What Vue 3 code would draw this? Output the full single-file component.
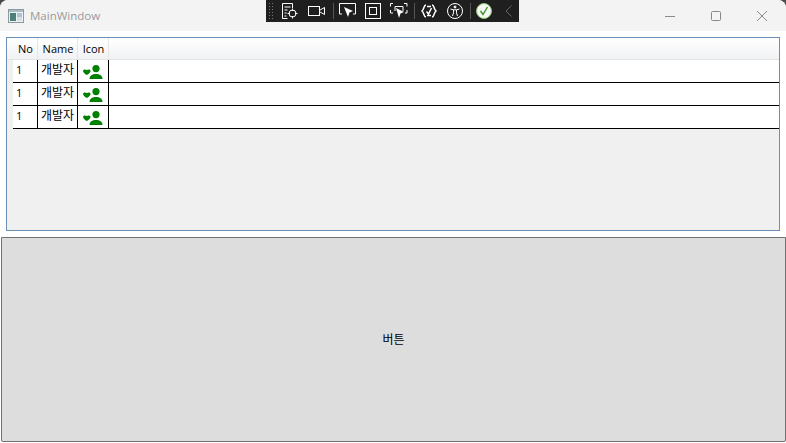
<script setup>
const rows = [1, 2, 3]
</script>

<template>
  <div class="window">
    <header class="titlebar">
      <svg class="app-icon" width="16" height="16" viewBox="0 0 16 16">
        <rect x="0.5" y="1.5" width="15" height="13" fill="#eef2f3" stroke="#8b9a9e" />
        <rect x="1" y="2" width="14" height="2" fill="#a9bcc4" />
        <rect x="2" y="5" width="6" height="8" fill="#4f7f78" />
        <rect x="9" y="5" width="5" height="4" fill="#a9c4d6" />
        <rect x="9" y="9" width="5" height="4" fill="#d5dfe2" />
      </svg>
      <span class="title">MainWindow</span>
      <div class="caption">
        <svg class="cap" width="12" height="12" viewBox="0 0 12 12"><path d="M1 6.5h10" stroke="#8a8a8a" fill="none" /></svg>
        <svg class="cap" width="12" height="12" viewBox="0 0 12 12"><rect x="1.5" y="1.5" width="9" height="9" rx="1" stroke="#8a8a8a" fill="none" /></svg>
        <svg class="cap" width="12" height="12" viewBox="0 0 12 12"><path d="M1 1l10 10M11 1L1 11" stroke="#8a8a8a" fill="none" /></svg>
      </div>
    </header>

    <section class="grid-host">
      <div class="grid">
        <div class="row head">
          <div class="cell">No</div>
          <div class="cell">Name</div>
          <div class="cell">Icon</div>
          <div class="cell rest"></div>
        </div>
        <div v-for="r in rows" :key="r" class="row body">
          <div class="cell left">1</div>
          <div class="cell center">개발자</div>
          <div class="cell icon">
            <svg width="20" height="14" viewBox="0 0 20 14">
              <circle cx="13" cy="3.600" r="3.600" fill="#008000" />
              <path d="M6.500 14c0-3.300 2.800-5 6.500-5s6.500 1.700 6.500 5z" fill="#008000" />
              <path d="M0 6c0-1.600 2.400-2.100 3.800-0.900 1.400-1.200 3.800-0.700 3.800 0.900 0 1.400-2.200 3-3.800 4.100-1.600-1.100-3.800-2.700-3.800-4.100z" fill="#008000" />
            </svg>
          </div>
          <div class="cell rest"></div>
        </div>
      </div>
    </section>

    <div class="action-wrap">
      <button class="action" type="button">버튼</button>
    </div>

    <nav class="devbar">
      <span class="grip"></span>
      <svg class="t t1" width="18" height="18" viewBox="0 0 18 18" fill="none" stroke="#fff">
        <path d="M11.500 6V1.500h-10v15h5M3.500 5h6M3.500 8h3M3.500 11h2M3.500 14h2" />
        <circle cx="11.500" cy="11.500" r="3.500" />
        <path d="M11.500 6.500v2.500M11.500 14v2.500M6.500 11.500H9M14 11.500h2.500" />
      </svg>
      <svg class="t t2" width="18" height="12" viewBox="0 0 18 12" fill="none" stroke="#fff">
        <rect x="0.500" y="1.500" width="11" height="9" />
        <path d="M12 5l4.500-2.500v7L12 7" />
      </svg>
      <span class="sep s1"></span>
      <svg class="t t3" width="18" height="18" viewBox="0 0 18 18" fill="none">
        <path d="M3 12H0.500V1.500h16V12H14" stroke="#fff" />
        <path d="M5 5l9 4-3.500 1.500L9 15z" fill="#fff" />
      </svg>
      <svg class="t t4" width="16" height="16" viewBox="0 0 16 16" fill="none" stroke="#fff">
        <rect x="0.500" y="0.500" width="15" height="15" />
        <rect x="4.500" y="4.500" width="7" height="7" />
      </svg>
      <svg class="t t5" width="18" height="18" viewBox="0 0 18 18" fill="none">
        <path d="M3 1.500H0.500v3M14 1.500h3v3M0.500 8v3H3M17 8v3h-2M5 4.500h8V9M5 4.500V9" stroke="#fff" />
        <path d="M6 6l8 4-3.500 1.500L9 16z" fill="#fff" />
      </svg>
      <span class="sep s2"></span>
      <svg class="t t6" width="16" height="14" viewBox="0 0 16 14" fill="none" stroke="#fff" stroke-width="1.500">
        <path d="M5 1C2.500 1 3.500 5 1 7c2.500 2 1.500 6 4 6M11 1c2.500 0 1.500 4 4 6-2.500 2-1.500 6-4 6" />
        <path d="M5.500 7.500l2 2.500 3-6M6 2.500h4M6 11.500h4" />
      </svg>
      <svg class="t t7" width="16" height="16" viewBox="0 0 16 16" fill="none" stroke="#fff">
        <circle cx="8" cy="8" r="7.500" />
        <circle cx="8" cy="4" r="1" fill="#fff" />
        <path d="M3.500 6l3 0.800v3L5.500 13M12.500 6l-3 0.800v3l1 3.200M6.500 6.800h3" />
      </svg>
      <span class="sep s3"></span>
      <svg class="t t8" width="16" height="16" viewBox="0 0 16 16">
        <circle cx="8" cy="8" r="7.500" fill="#f4f7f2" stroke="#8fc46f" />
        <path d="M4.500 8l2.500 3.500L11.500 4" fill="none" stroke="#3d8f2c" stroke-width="1.400" />
      </svg>
      <svg class="t t9" width="8" height="12" viewBox="0 0 8 12" fill="none" stroke="#666">
        <path d="M6.500 0.500L1 6l5.500 5.500" />
      </svg>
    </nav>
  </div>
</template>

<style>
html, body { margin: 0; background: #4a4a4a; }
</style>

<style scoped>
.window {
  position: relative;
  width: 786px;
  height: 443px;
  box-sizing: border-box;
  display: flex;
  flex-direction: column;
  overflow: hidden;
  background: #fff;
  border-radius: 8px 8px 0 0;
  font-family: "Open Sans", "Noto Sans CJK KR", sans-serif;
  font-size: 11px;
  color: #000;
}
.titlebar {
  flex: none;
  height: 31px;
  display: flex;
  align-items: center;
  padding-left: 8px;
  background: #f3f3f3;
}
.app-icon { flex: none; }
.title {
  margin-left: 6px;
  font-size: 11.5px;
  color: #9a9a9a;
}
.caption {
  margin-left: auto;
  display: flex;
  gap: 34px;
  padding-right: 18px;
  margin-top: 1px;
}
.grid-host {
  flex: none;
  height: 206px;
  box-sizing: border-box;
  padding: 6px 6px 6px 6px;
}
.grid {
  height: 100%;
  box-sizing: border-box;
  border: 1px solid #6c8fb5;
  background: #f0f0f0;
}
.row {
  display: grid;
  grid-template-columns: 25px 40px 31px 1fr;
  margin-left: 6px;
}
.head {
  height: 22px;
  margin-left: 0;
  padding-left: 6px;
  box-sizing: border-box;
  border-bottom: 1px solid #e2e3e5;
  background: linear-gradient(#fff, #f1f2f4);
}
.head .cell {
  display: flex;
  align-items: center;
  justify-content: center;
  padding-left: 1px;
  border-right: 1px solid #e6e6e6;
}
.head .rest { border-right: 0; }
.body {
  height: 23px;
  box-sizing: border-box;
  background: #fff;
  border-bottom: 1px solid #000;
}
.body .cell {
  display: flex;
  align-items: center;
  border-right: 1px solid #000;
  padding-bottom: 5px;
  box-sizing: border-box;
}
.body .left { padding-left: 3px; }
.body .center { justify-content: center; font-size: 12px; }
.body .icon { justify-content: center; padding-bottom: 0; padding-top: 0; }
.body .rest { border-right: 0; }
.action-wrap {
  flex: 1;
  display: flex;
  padding: 0 0 1px 1px;
}
.action {
  flex: 1;
  margin: 0;
  padding: 0 0 2px;
  border: 1px solid #707070;
  border-radius: 0 0 2px 2px;
  background: #dddddd;
  color: #000;
  font-family: "Open Sans", "Noto Sans CJK KR", sans-serif;
  font-size: 12px;
}
.devbar {
  position: absolute;
  top: 0;
  left: 266px;
  width: 253px;
  height: 22px;
  display: flex;
  align-items: center;
  background: #1f1f1f;
}
.grip {
  flex: none;
  width: 7px;
  height: 18px;
  margin-left: 2px;
  background-image: radial-gradient(#777 0.7px, transparent 0.8px);
  background-size: 3px 3px;
}
.t { flex: none; }
.t1 { margin-left: 6px; }
.t2 { margin-left: 9px; }
.sep { flex: none; width: 1px; height: 16px; background: #555; }
.s1 { margin-left: 7px; }
.t3 { margin-left: 5px; }
.t4 { margin-left: 8px; }
.t5 { margin-left: 9px; }
.s2 { margin-left: 6px; }
.t6 { margin-left: 6px; }
.t7 { margin-left: 10px; }
.s3 { margin-left: 7px; }
.t8 { margin-left: 5px; }
.t9 { margin-left: 13px; }
</style>
